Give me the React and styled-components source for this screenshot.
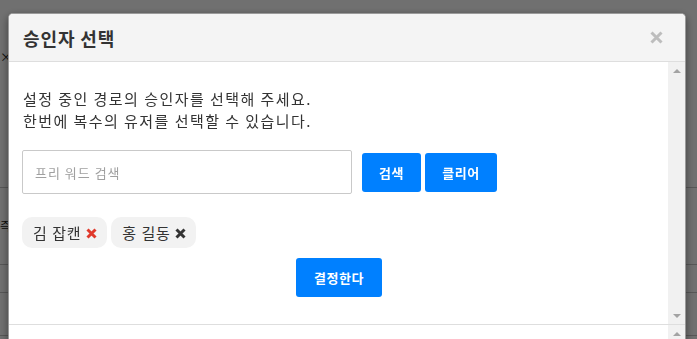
import React from "react";
import styled, { createGlobalStyle } from "styled-components";

const Global = createGlobalStyle`
  html, body { margin: 0; padding: 0; }
  body {
    font-family: "Noto Sans CJK KR", "Noto Sans", sans-serif;
    background: #fff;
    overflow: hidden;
  }
  #root { height: 339px; }
`;

const Underlay = styled.div`
  height: 339px;
  background: #fff;
  display: flex;
  flex-direction: column;
  color: #222;
  font-size: 12px;
`;

const UnderRow = styled.div`
  height: ${(p) => p.$h}px;
  flex: none;
  border-bottom: ${(p) => (p.$line ? "1px solid #c6c6c6" : "none")};
  display: flex;
  align-items: ${(p) => p.$align || "center"};
  line-height: 1;
`;

const Overlay = styled.div`
  position: fixed;
  inset: 0;
  background: rgba(0, 0, 0, 0.56);
  padding: 13px 0 0 8px;
  overflow: hidden;
`;

const Modal = styled.div`
  width: 678px;
  box-sizing: border-box;
  background: #fff;
  border: 1px solid #9a9a9a;
  border-bottom: none;
  border-radius: 5px 5px 0 0;
  box-shadow: 0 3px 9px rgba(0, 0, 0, 0.45);
  overflow: hidden;
`;

const Header = styled.div`
  height: 47px;
  background: #f4f4f4;
  border-bottom: 1px solid #dedede;
  display: flex;
  align-items: center;
  justify-content: space-between;
  padding: 0 22px 0 14px;
`;

const Title = styled.h4`
  margin: 0;
  font-size: 18px;
  font-weight: 700;
  color: #333;
  letter-spacing: 0.9px;
`;

const CloseButton = styled.button`
  border: none;
  background: none;
  padding: 0;
  width: 14px;
  height: 14px;
  display: flex;
  align-items: center;
  justify-content: center;
  cursor: pointer;
`;

const Section = styled.div`
  display: flex;
  height: ${(p) => p.$h}px;
  border-bottom: ${(p) => (p.$line ? "1px solid #dedede" : "none")};
`;

const Content = styled.div`
  flex: 1;
  padding: 26px 14px 0 13px;
  display: flex;
  flex-direction: column;
`;

const Scrollbar = styled.div`
  width: 17px;
  flex: none;
  background: #f1f1f1;
  display: flex;
  flex-direction: column;
  justify-content: ${(p) => (p.$topOnly ? "flex-start" : "space-between")};
`;

const ArrowBox = styled.div`
  height: 17px;
  display: flex;
  align-items: center;
  justify-content: center;
  &::before {
    content: "";
    width: 0;
    height: 0;
    border-left: 4px solid transparent;
    border-right: 4px solid transparent;
    ${(p) =>
      p.$dir === "up"
        ? "border-bottom: 4px solid #a3a3a3;"
        : "border-top: 4px solid #a3a3a3;"}
  }
`;

const Message = styled.p`
  margin: 0 0 0 1px;
  font-size: 15px;
  line-height: 22px;
  color: #333;
  letter-spacing: 1.45px;
`;

const SearchRow = styled.div`
  display: flex;
  align-items: center;
  margin-top: 18px;
`;

const SearchInput = styled.input`
  width: 330px;
  height: 44px;
  box-sizing: border-box;
  border: 1px solid #c9c9c9;
  border-radius: 2px;
  padding: 0 12px;
  font-family: inherit;
  font-size: 13px;
  letter-spacing: 1px;
  color: #333;
  outline: none;
  &::placeholder {
    color: #a0a0a0;
  }
`;

const BlueButton = styled.button`
  height: 39px;
  min-width: ${(p) => p.$w}px;
  margin-left: ${(p) => p.$gap}px;
  border: none;
  border-radius: 3px;
  background: #0080ff;
  color: #fff;
  font-family: inherit;
  font-size: 13px;
  font-weight: 700;
  letter-spacing: 0.5px;
  padding: 0 14px;
  cursor: pointer;
`;

const ChipRow = styled.div`
  display: flex;
  gap: 4px;
  margin-top: 23px;
`;

const Chip = styled.div`
  height: 31px;
  box-sizing: border-box;
  display: flex;
  align-items: center;
  gap: 5px;
  padding: 0 10px 0 11px;
  background: #f2f2f2;
  border-radius: 10px;
  font-size: 15px;
  color: #333;
  letter-spacing: 0.6px;
  word-spacing: 1px;
`;

const RemoveIcon = styled.svg`
  width: 11px;
  height: 11px;
  flex: none;
  margin-top: 2px;
`;

const Center = styled.div`
  display: flex;
  justify-content: center;
  margin-top: 10px;
  padding-left: 2px;
`;

const X = ({ color }) => (
  <RemoveIcon viewBox="0 0 11 11">
    <path d="M1.5 1.5 L9.5 9.5 M9.5 1.5 L1.5 9.5" stroke={color} strokeWidth="3" />
  </RemoveIcon>
);

export default function App() {
  return (
    <>
      <Global />
      <Underlay>
        <UnderRow $h={46} />
        <UnderRow $h={141} $line $align="flex-start">
          <span style={{ marginTop: 5 }}>×</span>
        </UnderRow>
        <UnderRow $h={76} $line>
          <span>즉</span>
        </UnderRow>
        <UnderRow $h={27} $line />
        <UnderRow $h={42} $line />
      </Underlay>
      <Overlay>
        <Modal>
          <Header>
            <Title>승인자 선택</Title>
            <CloseButton aria-label="close">
              <svg width="13" height="13" viewBox="0 0 13 13">
                <path d="M1.5 1.5 L11.5 11.5 M11.5 1.5 L1.5 11.5" stroke="#bdbdbd" strokeWidth="3" />
              </svg>
            </CloseButton>
          </Header>
          <Section $h={262} $line>
            <Content>
              <Message>
                설정 중인 경로의 승인자를 선택해 주세요.
                <br />
                한번에 복수의 유저를 선택할 수 있습니다.
              </Message>
              <SearchRow>
                <SearchInput placeholder="프리 워드 검색" />
                <BlueButton $w={59} $gap={10}>검색</BlueButton>
                <BlueButton $w={72} $gap={4}>클리어</BlueButton>
              </SearchRow>
              <ChipRow>
                <Chip>
                  김 잡캔
                  <X color="#e0392b" />
                </Chip>
                <Chip>
                  홍 길동
                  <X color="#333" />
                </Chip>
              </ChipRow>
              <Center>
                <BlueButton $w={86} $gap={0}>결정한다</BlueButton>
              </Center>
            </Content>
            <Scrollbar>
              <ArrowBox $dir="up" />
              <ArrowBox $dir="down" />
            </Scrollbar>
          </Section>
          <Section $h={60}>
            <Content />
            <Scrollbar $topOnly>
              <ArrowBox $dir="up" />
            </Scrollbar>
          </Section>
        </Modal>
      </Overlay>
    </>
  );
}
